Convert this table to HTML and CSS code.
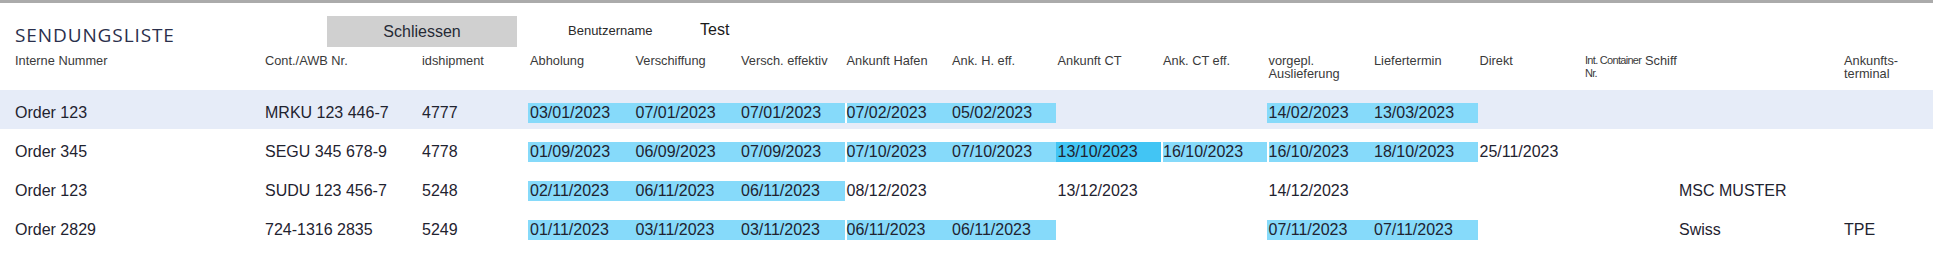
FILE: index.html
```html
<!DOCTYPE html>
<html lang="de">
<head>
<meta charset="utf-8">
<title>Sendungsliste</title>
<link rel="stylesheet" href="styles.css">
</head>
<body>
<div class="frame">
  <header class="topbar">
    <h1 class="title">SENDUNGSLISTE</h1>
    <button class="close-btn" type="button">Schliessen</button>
    <span class="user-label">Benutzername</span>
    <span class="user-name">Test</span>
  </header>

  <div class="table">
    <div class="row head">
      <div class="cell">Interne Nummer</div>
      <div class="cell">Cont./AWB Nr.</div>
      <div class="cell">idshipment</div>
      <div class="cell">Abholung</div>
      <div class="cell">Verschiffung</div>
      <div class="cell">Versch. effektiv</div>
      <div class="cell">Ankunft Hafen</div>
      <div class="cell">Ank. H. eff.</div>
      <div class="cell">Ankunft CT</div>
      <div class="cell">Ank. CT eff.</div>
      <div class="cell">vorgepl.<br>Auslieferung</div>
      <div class="cell">Liefertermin</div>
      <div class="cell">Direkt</div>
      <div class="cell narrow">Int. Container<br>Nr.</div>
      <div class="cell">Schiff</div>
      <div class="cell">Ankunfts-<br>terminal</div>
    </div>

    <div class="row data selected">
      <div class="cell">Order 123</div>
      <div class="cell">MRKU 123 446-7</div>
      <div class="cell">4777</div>
      <div class="cell hl">03/01/2023</div>
      <div class="cell hl">07/01/2023</div>
      <div class="cell hl">07/01/2023</div>
      <div class="cell hl gap">07/02/2023</div>
      <div class="cell hl">05/02/2023</div>
      <div class="cell"></div>
      <div class="cell"></div>
      <div class="cell hl">14/02/2023</div>
      <div class="cell hl">13/03/2023</div>
      <div class="cell"></div>
      <div class="cell"></div>
      <div class="cell ship"></div>
      <div class="cell"></div>
    </div>

    <div class="row data">
      <div class="cell">Order 345</div>
      <div class="cell">SEGU 345 678-9</div>
      <div class="cell">4778</div>
      <div class="cell hl">01/09/2023</div>
      <div class="cell hl">06/09/2023</div>
      <div class="cell hl">07/09/2023</div>
      <div class="cell hl gap">07/10/2023</div>
      <div class="cell hl">07/10/2023</div>
      <div class="cell hl-strong">13/10/2023</div>
      <div class="cell hl gap">16/10/2023</div>
      <div class="cell hl gap">16/10/2023</div>
      <div class="cell hl">18/10/2023</div>
      <div class="cell">25/11/2023</div>
      <div class="cell"></div>
      <div class="cell ship"></div>
      <div class="cell"></div>
    </div>

    <div class="row data">
      <div class="cell">Order 123</div>
      <div class="cell">SUDU 123 456-7</div>
      <div class="cell">5248</div>
      <div class="cell hl">02/11/2023</div>
      <div class="cell hl">06/11/2023</div>
      <div class="cell hl">06/11/2023</div>
      <div class="cell">08/12/2023</div>
      <div class="cell"></div>
      <div class="cell">13/12/2023</div>
      <div class="cell"></div>
      <div class="cell">14/12/2023</div>
      <div class="cell"></div>
      <div class="cell"></div>
      <div class="cell"></div>
      <div class="cell ship">MSC MUSTER</div>
      <div class="cell"></div>
    </div>

    <div class="row data">
      <div class="cell">Order 2829</div>
      <div class="cell">724-1316 2835</div>
      <div class="cell">5249</div>
      <div class="cell hl">01/11/2023</div>
      <div class="cell hl">03/11/2023</div>
      <div class="cell hl">03/11/2023</div>
      <div class="cell hl gap">06/11/2023</div>
      <div class="cell hl">06/11/2023</div>
      <div class="cell"></div>
      <div class="cell"></div>
      <div class="cell hl">07/11/2023</div>
      <div class="cell hl">07/11/2023</div>
      <div class="cell"></div>
      <div class="cell"></div>
      <div class="cell ship">Swiss</div>
      <div class="cell">TPE</div>
    </div>
  </div>
</div>
</body>
</html>
```

FILE: styles.css
```css
html, body {
  margin: 0;
  padding: 0;
  background: #ffffff;
}

body {
  font-family: "Liberation Sans", Arial, sans-serif;
  color: #1f2330;
}

.frame {
  border-top: 3px solid #ababab;
}

.topbar {
  display: flex;
  align-items: center;
  height: 50px;
  padding-top: 7px;
  padding-left: 15px;
  box-sizing: border-box;
}

.title {
  margin: 0;
  width: 312px;
  flex: none;
  font-family: "Open Sans", "Noto Sans", sans-serif;
  font-weight: 400;
  font-size: 19px;
  letter-spacing: 0.9px;
  color: #2a2f4c;
  padding-top: 6px;
}

.close-btn {
  flex: none;
  width: 190px;
  height: 31px;
  border: none;
  background: #d0d0d0;
  font-family: "Liberation Sans", Arial, sans-serif;
  font-size: 16px;
  color: #262a35;
  padding: 0;
}

.user-label {
  width: 132px;
  margin-left: 51px;
  font-size: 13px;
  color: #2a2a2a;
  margin-top: -2px;
}

.user-name {
  font-size: 16px;
  color: #1a1a1a;
  margin-top: -4px;
}

.table {
  display: flex;
  flex-direction: column;
}

.row {
  display: grid;
  grid-template-columns: 250px 157px 108px repeat(9, 105.5px) 105.5px 60px 199px 1fr;
  padding-left: 13px;
}

.cell {
  padding-left: 2px;
  white-space: nowrap;
  box-sizing: border-box;
}

.head {
  height: 37px;
  padding-top: 1px;
  box-sizing: border-box;
  align-items: start;
}

.head .cell {
  font-size: 12.8px;
  line-height: 13px;
  color: #3a3a3a;
}

.head .narrow {
  font-size: 11px;
  letter-spacing: -0.7px;
}

.data {
  height: 39px;
  align-items: start;
}

.data .cell {
  margin-top: 13px;
  height: 20px;
  line-height: 20px;
  font-size: 16px;
}

.data .ship {
  padding-left: 36px;
}

.selected {
  background: #e6ecf8;
}

.hl {
  background: #86dafa;
}

.hl-strong {
  background: #42c5f4;
}

.gap {
  box-shadow: inset 2px 0 0 #ffffff;
}
```
